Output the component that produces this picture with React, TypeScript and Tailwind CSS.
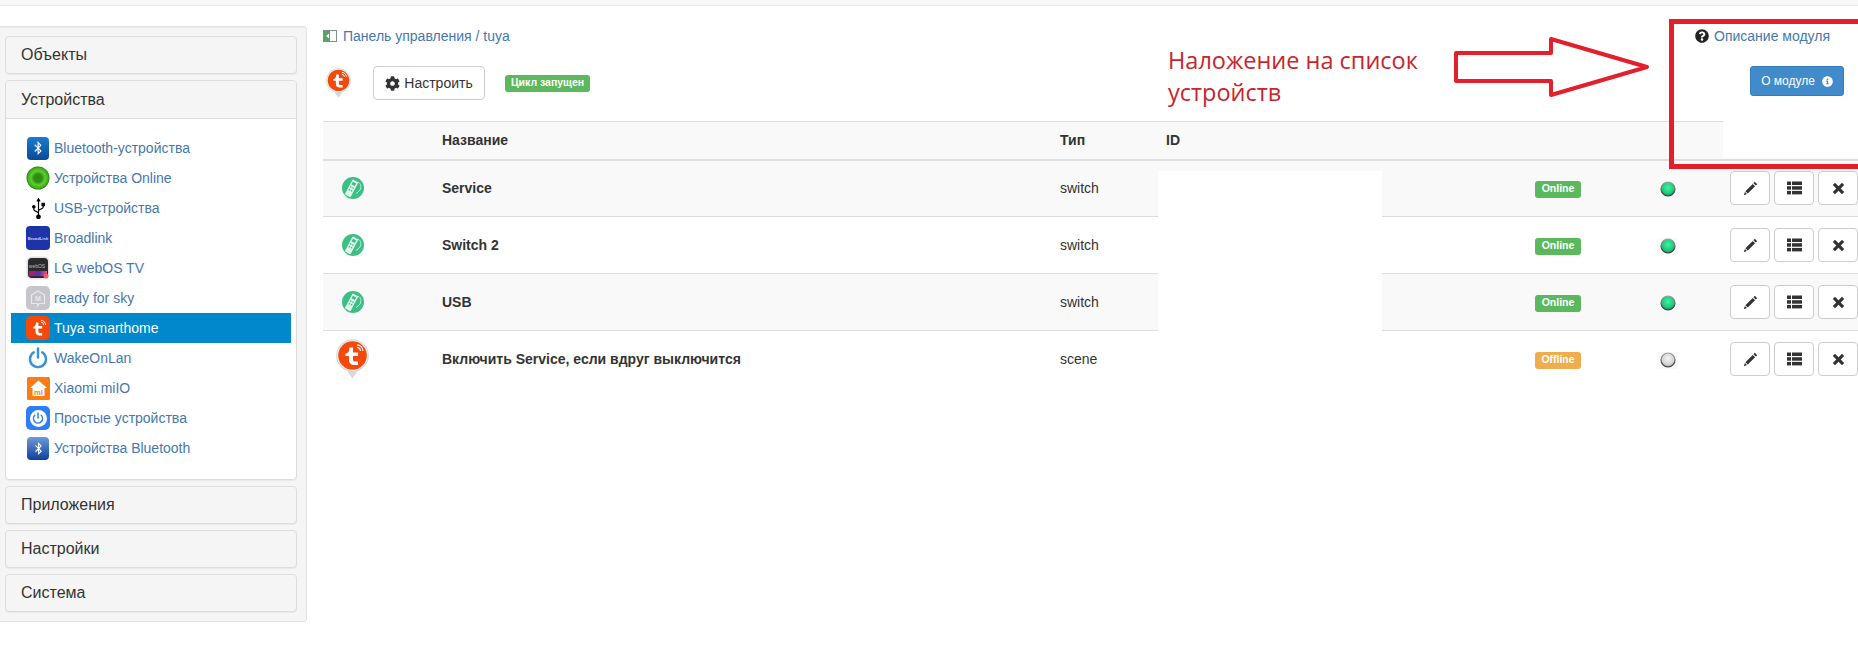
import { FaBluetoothB, FaCog, FaInfoCircle, FaQuestionCircle, FaUsb } from "react-icons/fa";
import { Power } from "lucide-react";
import type { ReactNode } from "react";

function TuyaT({ size = 24 }: { size?: number }) {
  return (
    <svg width={size} height={size} viewBox="0 0 24 24" className="block">
      <path d="M9.500 5.500h3v4h4.500v3h-4.500v3.500c0 1.400.8 2 2 2h2.500v3h-3.200c-3 0-4.800-1.800-4.800-4.600V12.500H6.500v-2c2 0 3-1.700 3-5z" fill="#fff" />
      <path d="M15.500 5a3.500 3.500 0 0 1 3.500 3.500M15.500 2.800a5.700 5.700 0 0 1 5.700 5.700" stroke="#fff" strokeWidth="1" fill="none" />
    </svg>
  );
}

function TuyaBubble({ w, h }: { w: number; h: number }) {
  return (
    <svg width={w} height={h} viewBox="0 0 33 40" className="block">
      <path d="M16.500 39.500 L9 29 H24 Z" fill="#d8d8d8" />
      <circle cx="16.500" cy="16.500" r="16.300" fill="#d4d4d4" />
      <circle cx="16.500" cy="16.500" r="15.300" fill="#f4f4f4" />
      <circle cx="16.500" cy="16.500" r="14.300" fill="#f24a0c" />
      <path d="M13.500 8.500h3.500v5h5v3.500h-5v3.500c0 1.400.8 2 2 2h3v3.500h-3.700c-3.200 0-5.300-1.800-5.300-4.800V17H9.500v-2.500c2.500 0 4-2 4-6z" fill="#fff" />
      <path d="M21 8.500a3.500 3.500 0 0 1 3.500 3.500M21 5.800a6 6 0 0 1 6 6" stroke="#fff" strokeWidth="1.200" fill="none" />
    </svg>
  );
}

function SwitchIcon() {
  return (
    <svg width="22" height="22" viewBox="0 0 22 22" className="block">
      <circle cx="11" cy="11" r="11" fill="#3cbf86" />
      <g transform="rotate(28 10 11)">
        <rect x="6.500" y="3" width="6.500" height="17" rx="1" fill="#dff5ea" />
        <rect x="7.800" y="5" width="3.800" height="3" fill="#3cbf86" />
        <rect x="7.800" y="10" width="1.400" height="1.400" fill="#3cbf86" />
        <rect x="10.200" y="10" width="1.400" height="1.400" fill="#3cbf86" />
        <rect x="7.800" y="13" width="1.400" height="1.400" fill="#3cbf86" />
        <rect x="10.200" y="13" width="1.400" height="1.400" fill="#3cbf86" />
      </g>
      <path d="M16 5c3 1.500 3.500 5 2 8-1 1.500-2.500 2.500-4 3.500" stroke="#dff5ea" strokeWidth="0.800" fill="none" />
    </svg>
  );
}

function Led({ on }: { on: boolean }) {
  const id = on ? "led-on" : "led-off";
  return (
    <span className="w-[21px] h-[17px] bg-[#f9f9f9] flex items-center justify-center mt-[2px]">
      <svg width="16" height="16" viewBox="0 0 16 16" className="block">
        <defs>
          <radialGradient id={id} cx="50%" cy="40%" r="60%">
            <stop offset="0%" stopColor={on ? "#3df5a0" : "#f4f4f4"} />
            <stop offset="70%" stopColor={on ? "#1fc77a" : "#d4d4d4"} />
            <stop offset="100%" stopColor={on ? "#128a55" : "#9c9c9c"} />
          </radialGradient>
          <linearGradient id={`${id}-edge`} x1="0" x2="0" y1="0" y2="1">
            <stop offset="0%" stopColor="#9aa5a0" />
            <stop offset="100%" stopColor="#333" />
          </linearGradient>
        </defs>
        <circle cx="8" cy="8" r="7" fill={`url(#${id})`} stroke={`url(#${id}-edge)`} strokeWidth="1.200" />
      </svg>
    </span>
  );
}

function BluetoothTile({ dark }: { dark?: boolean }) {
  return (
    <div className={`w-[22px] h-[23px] rounded-[4px] flex items-center justify-center text-white ml-px bg-gradient-to-b ${dark ? "from-[#6f9bd6] to-[#0d3f9c]" : "from-[#1a7cd0] to-[#0a4a94]"}`}>
      <FaBluetoothB size={dark ? 13 : 14} />
    </div>
  );
}

function OnlineBall() {
  return (
    <svg width="24" height="24" viewBox="0 0 24 24" className="block">
      <defs>
        <radialGradient id="ball" cx="50%" cy="50%" r="50%">
          <stop offset="0%" stopColor="#2e8a12" />
          <stop offset="35%" stopColor="#2e8f12" />
          <stop offset="62%" stopColor="#5ccf2e" />
          <stop offset="88%" stopColor="#3fae1c" />
          <stop offset="100%" stopColor="#1f7f0c" />
        </radialGradient>
      </defs>
      <circle cx="12" cy="12" r="11.500" fill="url(#ball)" />
    </svg>
  );
}

function Broadlink() {
  return (
    <svg width="24" height="24" viewBox="0 0 24 24" className="block">
      <rect width="24" height="24" rx="4" fill="#1e33a6" />
      <text x="12" y="13.500" textAnchor="middle" fontSize="4.200" fontWeight="700" fill="#c9d2f5" fontFamily="Liberation Sans">BroadLink</text>
    </svg>
  );
}

function WebOs() {
  return (
    <svg width="24" height="24" viewBox="0 0 24 24" className="block">
      <defs>
        <linearGradient id="lgbar" x1="0" x2="1" y1="0" y2="0">
          <stop offset="0%" stopColor="#c2185b" />
          <stop offset="55%" stopColor="#5e2bb5" />
          <stop offset="100%" stopColor="#f0576a" />
        </linearGradient>
      </defs>
      <rect x="0.500" y="0.500" width="23" height="23" rx="5" fill="#e2e2e2" />
      <rect x="2" y="2" width="20" height="20" rx="4" fill="#2b2b2e" />
      <text x="11" y="11.500" textAnchor="middle" fontSize="5" fill="#b9b9b9" fontFamily="Liberation Sans">webOS</text>
      <rect x="3" y="15" width="18" height="5" fill="url(#lgbar)" />
      <circle cx="20" cy="20" r="2.500" fill="#f0576a" />
    </svg>
  );
}

function ReadyForSky() {
  return (
    <svg width="24" height="24" viewBox="0 0 24 24" className="block">
      <rect width="24" height="24" rx="5" fill="#c5c5cb" />
      <path d="M12 5l6.500 4v8.500h-5L11.500 20v-2.500H5.500V9z" fill="none" stroke="#e9e9ec" strokeWidth="1.200" />
      <text x="12" y="15" textAnchor="middle" fontSize="7" fontWeight="700" fill="#e9e9ec" fontFamily="Liberation Sans">M</text>
    </svg>
  );
}

function TuyaTile() {
  return (
    <div className="w-[24px] h-[24px] rounded-[5px] bg-[#f5490c] flex items-center justify-center">
      <TuyaT size={20} />
    </div>
  );
}

function WakeIcon() {
  return (
    <svg width="24" height="24" viewBox="0 0 24 24" className="block">
      <path d="M3.500 17.500a11 11 0 0 0 17 0" stroke="#dfe5ec" strokeWidth="1.800" fill="none" />
      <path d="M7.800 6.300a8 8 0 1 0 8.400 0" stroke="#3a8fd8" strokeWidth="2.400" fill="none" strokeLinecap="round" />
      <path d="M12 2.500v9" stroke="#3a8fd8" strokeWidth="2.400" strokeLinecap="round" />
    </svg>
  );
}

function XiaomiIcon() {
  return (
    <svg width="23" height="23" viewBox="0 0 23 23" className="block ml-px">
      <rect width="23" height="23" rx="1.500" fill="#f97d14" />
      <path d="M11.500 3.500L20 11h-2.500v8h-12v-8H3z" fill="#fff" />
      <text x="11.500" y="17.500" textAnchor="middle" fontSize="7.500" fontWeight="700" fill="#f97d14" fontFamily="Liberation Sans">mi</text>
    </svg>
  );
}

function SimpleIcon() {
  return (
    <div className="w-[24px] h-[24px] rounded-[5px] bg-[#2f7df6] flex items-center justify-center">
      <div className="w-[17px] h-[17px] rounded-full bg-white flex items-center justify-center text-[#2f7df6]">
        <Power size={12} strokeWidth={3} />
      </div>
    </div>
  );
}

function PencilGlyph() {
  return (
    <svg width="15" height="15" viewBox="0 0 15 15" className="block" fill="#333">
      <path d="M11.800.8l2.400 2.400-1.400 1.400-2.400-2.400zM9.700 2.900l2.400 2.400-7.300 7.300-2.400-2.400zM1.900 11l2.100 2.100-3.200 1.100z" />
    </svg>
  );
}

function ListGlyph() {
  return (
    <svg width="15" height="14" viewBox="0 0 15 14" className="block" fill="#333">
      <rect x="0" y="0.500" width="4" height="3.500" />
      <rect x="5" y="0.500" width="10" height="3.500" />
      <rect x="0" y="5.200" width="4" height="3.500" />
      <rect x="5" y="5.200" width="10" height="3.500" />
      <rect x="0" y="9.900" width="4" height="3.500" />
      <rect x="5" y="9.900" width="10" height="3.500" />
    </svg>
  );
}

function CrossGlyph() {
  return (
    <svg width="13" height="13" viewBox="0 0 13 13" className="block" fill="#333">
      <path d="M3 .8l3.500 3.500L10 .8l2.200 2.200-3.500 3.500 3.500 3.500-2.200 2.200-3.500-3.500L3 12.200.8 10l3.500-3.500L.8 3z" />
    </svg>
  );
}

const devices: { label: string; icon: ReactNode; active?: boolean }[] = [
  { label: "Bluetooth-устройства", icon: <BluetoothTile /> },
  { label: "Устройства Online", icon: <OnlineBall /> },
  { label: "USB-устройства", icon: <div className="w-[24px] flex justify-center text-black"><FaUsb size={21} className="-rotate-90" /></div> },
  { label: "Broadlink", icon: <Broadlink /> },
  { label: "LG webOS TV", icon: <WebOs /> },
  { label: "ready for sky", icon: <ReadyForSky /> },
  { label: "Tuya smarthome", icon: <TuyaTile />, active: true },
  { label: "WakeOnLan", icon: <WakeIcon /> },
  { label: "Xiaomi miIO", icon: <XiaomiIcon /> },
  { label: "Простые устройства", icon: <SimpleIcon /> },
  { label: "Устройства Bluetooth", icon: <BluetoothTile dark /> },
];

const rows = [
  { name: "Service", type: "switch", online: true, scene: false },
  { name: "Switch 2", type: "switch", online: true, scene: false },
  { name: "USB", type: "switch", online: true, scene: false },
  { name: "Включить Service, если вдруг выключится", type: "scene", online: false, scene: true },
];

function PanelHead({ title }: { title: string }) {
  return (
    <div className="h-[38px] border border-[#ddd] rounded-[4px] bg-[#f5f5f5] shadow-[0_1px_1px_rgba(0,0,0,0.05)] pl-[15px] flex items-center text-[16px] text-[#333]">
      {title}
    </div>
  );
}

function IconButton({ children }: { children: ReactNode }) {
  return (
    <button className="w-[40px] h-[34px] shrink-0 border border-[#ccc] rounded-[4px] bg-white flex items-center justify-center text-[#333]">
      {children}
    </button>
  );
}

export default function App() {
  return (
    <div className="relative h-[663px] w-[1858px] overflow-hidden bg-white font-['Liberation_Sans',Arial,sans-serif] text-[14px] text-[#333]">
      <div className="h-[6px] bg-[#f8f8f8] border-b border-[#e7e7e7]" />

      <div className="flex items-start pt-[20px]">
        <aside className="w-[307px] h-[596px] shrink-0 bg-[#f5f5f5] border border-l-0 border-[#e3e3e3] rounded-r-[4px] pt-[9px] pl-[5px] pr-[9px] flex flex-col gap-[6px] shadow-[inset_0_1px_1px_rgba(0,0,0,0.05)]">
          <PanelHead title="Объекты" />
          <div className="border border-[#ddd] rounded-[4px] bg-white shadow-[0_1px_1px_rgba(0,0,0,0.05)]">
            <div className="h-[38px] bg-[#f5f5f5] border-b border-[#ddd] rounded-t-[4px] pl-[15px] flex items-center text-[16px] text-[#333]">Устройства</div>
            <ul className="px-[5px] pt-[14px] pb-[16px]">
              {devices.map((d) => (
                <li key={d.label} className={`h-[30px] pl-[15px] flex items-center gap-[4px] ${d.active ? "bg-[#0088cc] text-white" : "text-[#4678ae]"}`}>
                  <span className="w-[24px] flex justify-start shrink-0">{d.icon}</span>
                  <span>{d.label}</span>
                </li>
              ))}
            </ul>
          </div>
          <PanelHead title="Приложения" />
          <PanelHead title="Настройки" />
          <PanelHead title="Система" />
        </aside>

        <main className="flex-1 ml-[16px] min-w-0">
          <div className="h-[20px] flex items-center gap-[6px] text-[#4678ae]">
            <svg width="14" height="14" viewBox="0 0 14 14" className="block">
              <rect x="0.500" y="1.500" width="13" height="11" fill="#fff" stroke="#7d8f95" />
              <rect x="1" y="2" width="6" height="10" fill="#56a36a" />
              <path d="M6 4.500L3 7l3 2.500z" fill="#fff" />
            </svg>
            <span>Панель управления / tuya</span>
          </div>

          <div className="mt-[20px] h-[34px] flex items-center">
            <div className="ml-[3px] w-[25px]"><TuyaBubble w={25} h={30} /></div>
            <button className="ml-[22px] w-[112px] h-[34px] border border-[#ccc] rounded-[4px] bg-white flex items-center justify-center gap-[4px] text-[#333]">
              <FaCog size={15} />
              Настроить
            </button>
            <span className="ml-[20px] w-[85px] h-[17px] rounded-[3px] bg-[#5cb85c] text-white text-[10.500px] font-bold flex items-center justify-center">Цикл запущен</span>
          </div>

          <table className="mt-[21px] w-full table-fixed border-collapse">
            <thead>
              <tr className="h-[38px] bg-[#f9f9f9] border-t border-b-2 border-[#ddd] text-left font-bold">
                <th className="w-[111px]" />
                <th className="w-[618px] px-[8px]">Название</th>
                <th className="w-[106px] px-[8px]">Тип</th>
                <th className="w-[369px] px-[8px]">ID</th>
                <th className="w-[122px]" />
                <th className="w-[73px]" />
                <th className="w-[136px]" />
              </tr>
            </thead>
            <tbody>
              {rows.map((row, i) => (
                <tr key={row.name} className={`h-[57px] ${i < 3 ? "border-b border-[#ddd]" : ""} ${i % 2 === 0 ? "bg-[#f9f9f9]" : "bg-white"}`}>
                  <td>
                    <div className={row.scene ? "ml-[13px]" : "ml-[19px]"}>
                      {row.scene ? <TuyaBubble w={33} h={40} /> : <SwitchIcon />}
                    </div>
                  </td>
                  <td className="px-[8px] font-bold">{row.name}</td>
                  <td className="px-[8px]">{row.type}</td>
                  <td />
                  <td className="px-[8px]">
                    <span className={`mt-[2px] w-[46px] h-[17px] rounded-[3px] text-white text-[10.500px] font-bold flex items-center justify-center ${row.online ? "bg-[#5cb85c]" : "bg-[#f0ad4e]"}`}>
                      {row.online ? "Online" : "Offline"}
                    </span>
                  </td>
                  <td className="pl-[8px]"><Led on={row.online} /></td>
                  <td className="pl-[8px]">
                    <div className="flex gap-[4px]">
                      <IconButton><PencilGlyph /></IconButton>
                      <IconButton><ListGlyph /></IconButton>
                      <IconButton><CrossGlyph /></IconButton>
                    </div>
                  </td>
                </tr>
              ))}
            </tbody>
          </table>
        </main>
      </div>

      {/* blanked id column */}
      <div className="absolute left-[1158px] top-[171px] w-[224px] h-[161px] bg-white" />

      {/* module block sitting over the device list */}
      <div className="absolute right-0 top-[26px] w-[163px] flex flex-col">
        <div className="h-[20px] flex items-center gap-[5px]">
          <FaQuestionCircle size={14} className="text-[#222]" />
          <span className="text-[#4678ae]">Описание модуля</span>
        </div>
        <button className="mt-[20px] ml-[55px] w-[94px] h-[30px] rounded-[3px] bg-[#428bca] border border-[#357ebd] text-white text-[12px] flex items-center justify-center gap-[7px]">
          О модуле
          <FaInfoCircle size={11} />
        </button>
        <div className="mt-[25px] ml-[28px] h-[37px] bg-white" />
      </div>

      {/* red annotation */}
      <div className="absolute left-[1669px] right-0 top-[19px] h-[150px] border-[5px] border-r-0 border-[#e21f2b]" />
      <div className="absolute left-[1168px] top-[44px] w-[270px] text-[23.500px] leading-[32px] text-[#c8252f] font-['Open_Sans',sans-serif]">
        Наложение на список устройств
      </div>
      <svg width="200" height="64" viewBox="0 0 200 64" className="absolute left-[1454px] top-[36px]">
        <path d="M2 17H97V3L193 31L97 59V45H2z" fill="#fff" stroke="#e21f2b" strokeWidth="4" strokeLinejoin="round" />
      </svg>
    </div>
  );
}
